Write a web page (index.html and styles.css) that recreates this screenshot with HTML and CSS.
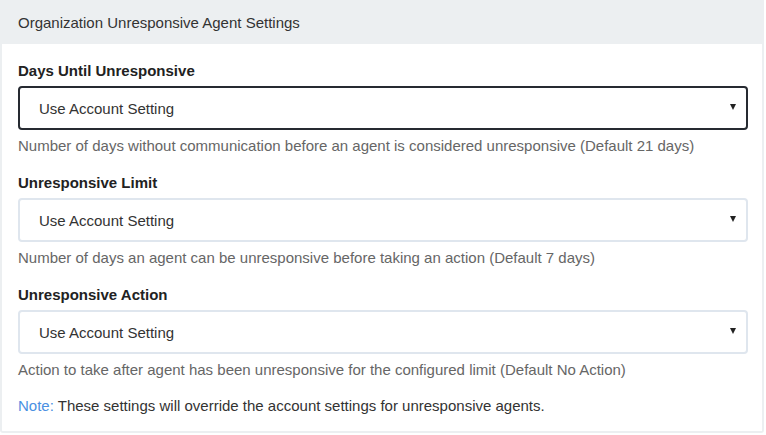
FILE: index.html
```html
<!DOCTYPE html>
<html>
<head>
<meta charset="utf-8">
<link rel="stylesheet" href="styles.css">
</head>
<body>
<div class="card">
  <div class="card-header">Organization Unresponsive Agent Settings</div>
  <div class="card-body">
    <div class="field">
      <div class="label">Days Until Unresponsive</div>
      <div class="select focused"><span>Use Account Setting</span><span class="caret"></span></div>
      <div class="help">Number of days without communication before an agent is considered unresponsive (Default 21 days)</div>
    </div>
    <div class="field">
      <div class="label">Unresponsive Limit</div>
      <div class="select"><span>Use Account Setting</span><span class="caret"></span></div>
      <div class="help">Number of days an agent can be unresponsive before taking an action (Default 7 days)</div>
    </div>
    <div class="field">
      <div class="label">Unresponsive Action</div>
      <div class="select"><span>Use Account Setting</span><span class="caret"></span></div>
      <div class="help">Action to take after agent has been unresponsive for the configured limit (Default No Action)</div>
    </div>
    <div class="note"><span class="note-label">Note:</span> These settings will override the account settings for unresponsive agents.</div>
  </div>
</div>
</body>
</html>
```
FILE: styles.css
```css
* { box-sizing: border-box; }
body {
  margin: 0;
  font-family: "Liberation Sans", Arial, sans-serif;
  font-size: 15px;
  color: #333;
  background: #fff;
}
.card {
  width: 764px;
  height: 433px;
  border: 2px solid #eceff1;
  border-top: 0;
  border-radius: 0 0 3px 3px;
}
.card-header {
  height: 44px;
  line-height: 42px;
  padding: 2px 16px 0;
  background: #eceff1;
  color: #333;
  font-size: 15px;
}
.card-body {
  padding: 17px 14px 0 16px;
}
.field {
  display: flex;
  flex-direction: column;
}
.label {
  font-weight: bold;
  color: #222;
  height: 25px;
  line-height: 20px;
}
.select {
  height: 44px;
  border: 2px solid #dfe6ee;
  border-radius: 4px;
  display: flex;
  align-items: center;
  justify-content: space-between;
  padding: 0 10px 0 19px;
  color: #333;
}
.select.focused { border-color: #262a31; }
.caret {
  width: 0;
  height: 0;
  border-left: 3px solid transparent;
  border-right: 3px solid transparent;
  border-top: 6px solid #222;
  margin-top: -2px;
}
.help {
  color: #666;
  height: 43px;
  line-height: 18px;
  padding-top: 7px;
}
.note {
  line-height: 18px;
}
.note-label { color: #4a90e2; }
```
